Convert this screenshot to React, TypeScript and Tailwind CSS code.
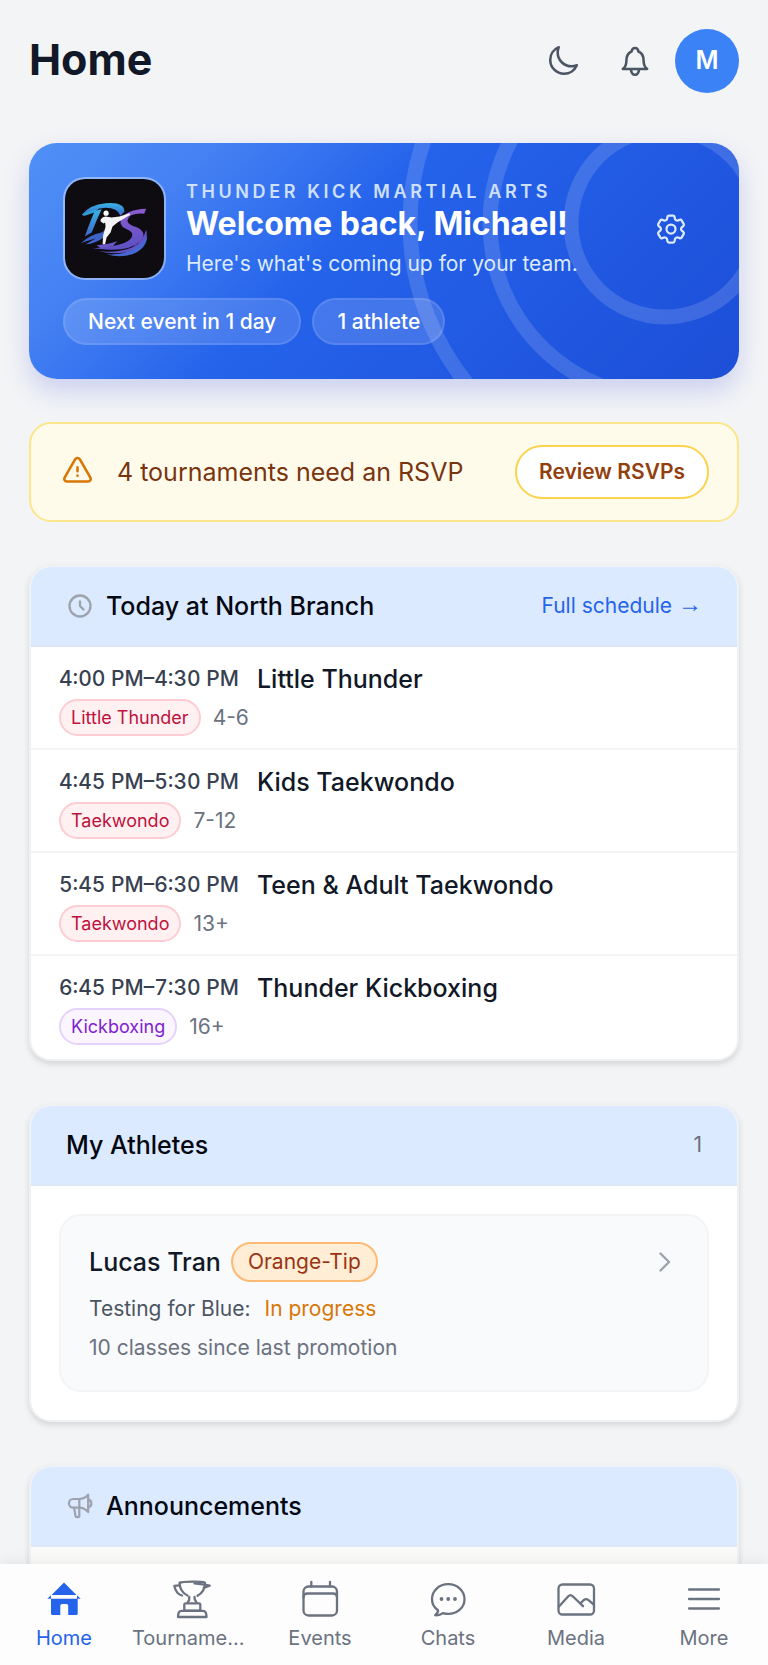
import type { ReactNode } from 'react'
import { HiOutlineClock } from 'react-icons/hi'
import { HiOutlineCog6Tooth, HiOutlineMoon } from 'react-icons/hi2'

const classes = [
  { time: '4:00 PM–4:30 PM', name: 'Little Thunder', tag: 'Little Thunder', ages: '4-6', tone: 'rose' },
  { time: '4:45 PM–5:30 PM', name: 'Kids Taekwondo', tag: 'Taekwondo', ages: '7-12', tone: 'rose' },
  { time: '5:45 PM–6:30 PM', name: 'Teen & Adult Taekwondo', tag: 'Taekwondo', ages: '13+', tone: 'rose' },
  { time: '6:45 PM–7:30 PM', name: 'Thunder Kickboxing', tag: 'Kickboxing', ages: '16+', tone: 'purple' },
]

const tones: Record<string, string> = {
  rose: 'border-[#fecdd3] bg-[#fff1f2] text-[#be123c]',
  purple: 'border-[#e4d4fd] bg-[#faf5ff] text-[#7e22ce]',
}

interface IconProps {
  className?: string
  box?: string
  width?: number
  children: ReactNode
}

function Icon({ className = 'size-10', box = '0 0 40 40', width = 2.3, children }: IconProps) {
  return (
    <svg
      className={className}
      viewBox={box}
      fill="none"
      stroke="currentColor"
      strokeWidth={width}
      strokeLinecap="round"
      strokeLinejoin="round"
      aria-hidden="true"
    >
      {children}
    </svg>
  )
}

function BellIcon() {
  return (
    <Icon className="size-9" box="0 0 24 24" width={1.7}>
      <path d="M3.9 17.3c1.8-1 2.3-2.5 2.4-5.8.1-3.1.8-4.8 3.4-5.8.2-1.5 1-2.4 2.3-2.4s2.1.9 2.3 2.4c2.6 1 3.3 2.7 3.4 5.8.1 3.3.6 4.8 2.4 5.8z" />
      <path d="M9.3 17.6c.2 2.4 1.2 3.6 2.7 3.6s2.5-1.2 2.7-3.6" />
    </Icon>
  )
}

function WarningIcon() {
  return (
    <Icon className="size-9 shrink-0 text-[#d97706]" box="0 0 36 36" width={2.6}>
      <path d="M16.1 5.4 5.6 23.6a2.6 2.6 0 0 0 2.2 3.9h21.4a2.6 2.6 0 0 0 2.2-3.9L20.9 5.4a2.8 2.8 0 0 0-4.8 0z" />
      <path d="M18.5 13.3v4M18.5 21.6v.1" />
    </Icon>
  )
}

function MegaphoneIcon() {
  return (
    <Icon className="size-7 text-[#9ca3af]" box="0 0 24 24" width={1.9}>
      <path d="M11.4 6H6.2a3.7 3.7 0 0 0 0 7.4h5.2z" />
      <path d="M11.4 6c2.8 0 5.6-1.4 7.6-3.6v14.8c-2-2.2-4.8-3.8-7.6-3.8" />
      <path d="M19 6.6c3.7.7 3.7 5.7 0 6.4" />
      <path d="M6.9 13.4l1.3 7.3c.3 1.2 2.9 1.2 3.2 0v-7.3" />
    </Icon>
  )
}

function TrophyIcon() {
  return (
    <Icon>
      <path d="M7.5 4c3-1.5 22-1.8 25.5-.3 0 6-2.5 10.3-7.5 13M7.5 4c.4 5.5 2.500 10 8 12.500" />
      <path d="M7.5 6.3 2.3 6.9c1.2 5 3.5 8.6 7.700 9.600" />
      <path d="M22.5 4.4 32.5 5.6l5.2 1-6 2.2" />
      <path d="M17.3 18c.2 2.3-.3 4-1.6 5.4M22.5 18c-.2 2.3.5 4 2 5.4" />
      <path d="M13.5 24.3h13.5a1.3 1.3 0 0 1 1.3 1.3v6H12.300v-6a1.300 1.300 0 0 1 1.200-1.300z" />
      <path d="M9.5 31.8h21.5c2 0 3.5 2.5 3.5 6.2H6c0-3.7 1.5-6.2 3.5-6.2z" />
    </Icon>
  )
}

function Logo() {
  return (
    <svg className="size-full" viewBox="0 0 100 100" aria-hidden="true">
      <defs>
        <linearGradient id="dojoD" x1="0" y1="0" x2="0" y2="1">
          <stop offset="0" stopColor="#38b4e6" />
          <stop offset="1" stopColor="#3f66cc" />
        </linearGradient>
        <linearGradient id="dojoS" x1="0" y1="0" x2="0" y2="1">
          <stop offset="0" stopColor="#8c5ad2" />
          <stop offset="1" stopColor="#5b50c4" />
        </linearGradient>
      </defs>
      <path d="M17 36Q25 26 41 24.5Q60 23 60 33L56 37Q53 29 41 29Q29 30 19 37Z" fill="url(#dojoD)" />
      <path d="M17 36Q24 32 34 30L29 34L20 37Z" fill="#2f9fd8" />
      <path d="M30 32L37 30.5Q32 41 27 54L20 58Q25 44 30 32Z" fill="url(#dojoD)" />
      <path d="M16 65Q25 56 37 54L43 50L39 59Q31 65 21 66Q27 62 31 60Q23 62 16 65Z" fill="#3f62c8" />
      <path d="M82 30L80 35Q64 34 63 42Q63 46 73 49Q83 54 77 62Q67 72 45 71.5Q35 71 28 70Q42 69 52 67Q68 63 68 56Q68 53 61 50Q54 47 57 40Q62 31 82 30Z" fill="url(#dojoS)" />
      <path d="M32 67Q45 66 53 63L48 68L36 70Z" fill="#6b56c8" />
      <path d="M82 51Q86 66 67 73Q51 77 34 73Q54 75 68 69Q79 63 82 51Z" fill="#6252c6" />
      <path d="M83 57Q83 70 68 76Q55 80 42 76Q59 77 69 71Q79 66 83 57Z" fill="#4668d2" />
      <circle cx="41.5" cy="34.5" r="2.6" fill="#fff" />
      <path d="M36 41Q38 38 41 38L47 39L55 38L65 34.5L66 36L53 44L48 48L46 54L42 59L40.5 66L38 66L38.5 57L41 48L40.5 44L39 45L36 43Z" fill="#f4f4f6" />
    </svg>
  )
}

function SectionHeader({ title, icon, children }: { title: string; icon?: ReactNode; children?: ReactNode }) {
  return (
    <div className="flex h-20 items-center gap-3 border-b-2 border-[#dce6f5] bg-[#dbeafe] px-[35px] text-[#030712]">
      {icon}
      <h2 className="flex-1 text-[25px] font-medium leading-8">{title}</h2>
      {children}
    </div>
  )
}

function Card({ children }: { children: ReactNode }) {
  return (
    <section className="overflow-hidden rounded-[22px] border-2 border-[#e5e7eb]/60 bg-white shadow-[0_3px_6px_rgba(0,0,0,0.13)]">
      {children}
    </section>
  )
}

function Chip({ children }: { children: ReactNode }) {
  return (
    <span className="rounded-full border-2 border-white/10 bg-white/15 px-[23px] py-[7px] text-[21px] font-medium leading-[29px]">
      {children}
    </span>
  )
}

function TabItem({ label, active, children }: { label: string; active?: boolean; children: ReactNode }) {
  return (
    <a
      href="#"
      aria-current={active ? 'page' : undefined}
      className={`flex min-w-0 flex-1 flex-col items-center px-1 ${active ? 'text-[#2563eb]' : 'text-[#6b7280]'}`}
    >
      {children}
      <span className="mt-[5px] max-w-full truncate text-[20px] leading-7">{label}</span>
    </a>
  )
}

export default function App() {
  return (
    <div className="flex h-screen flex-col bg-[#f3f4f6] font-['Inter',sans-serif] text-[#111827]">
      <div className="min-h-0 flex-1 overflow-hidden">
        <header className="flex items-center px-[29px] pt-[25px]">
          <h1 className="flex-1 pb-1 text-[43px] font-bold leading-[64px]">Home</h1>
          <button type="button" aria-label="Dark mode" className="flex size-[72px] items-center justify-center text-[#4b5563]">
            <HiOutlineMoon className="size-[34px] stroke-[1.8]" />
          </button>
          <button type="button" aria-label="Notifications" className="flex size-[72px] items-center justify-center text-[#4b5563]">
            <BellIcon />
          </button>
          <button type="button" aria-label="Account" className="ml-1 size-16 rounded-full bg-[#3b82f6] text-[25px] font-semibold text-white">
            M
          </button>
        </header>

        <main className="flex flex-col gap-[43px] px-[29px] pt-[46px]">
          <section className="relative rounded-[28px] bg-[linear-gradient(135deg,#5090f6_0%,#4581f3_20%,#2563eb_43%,#1d4ed8_100%)] p-[34px] text-white shadow-[0_12px_26px_rgba(60,80,220,0.22)]">
            <div className="absolute inset-0 overflow-hidden rounded-[28px]">
              <svg className="absolute -top-[183px] -right-[189px] size-[526px]" viewBox="0 0 526 526" fill="none" stroke="#fff" strokeOpacity="0.14" strokeWidth="15" aria-hidden="true">
                <circle cx="263" cy="263" r="94" />
                <circle cx="263" cy="263" r="175" />
                <circle cx="263" cy="263" r="255" />
              </svg>
            </div>
            <div className="relative flex items-center gap-5">
              <div className="size-[103px] shrink-0 overflow-hidden rounded-[22px] border-2 border-white/40 bg-[#0e0c10] bg-clip-padding">
                <Logo />
              </div>
              <div className="min-w-0 flex-1 pt-[3px]">
                <p className="text-[18px] font-semibold leading-6 tracking-[0.2em] text-[#cfe0fd]">THUNDER KICK MARTIAL ARTS</p>
                <p className="text-[32px] font-bold leading-10">Welcome back, Michael!</p>
                <p className="mt-1 text-[21px] leading-8 text-[#dbeafe]">Here's what's coming up for your team.</p>
              </div>
              <button type="button" aria-label="Settings" className="flex size-[68px] items-center justify-center text-[#dbeafe]">
                <HiOutlineCog6Tooth className="size-9" />
              </button>
            </div>
            <div className="relative mt-[18px] flex gap-[11px]">
              <Chip>Next event in 1 day</Chip>
              <Chip>1 athlete</Chip>
            </div>
          </section>

          <section className="flex items-center gap-[22px] rounded-[22px] border-2 border-[#fde68a] bg-[#fffbeb] px-7 py-[21px]">
            <WarningIcon />
            <p className="flex-1 text-[25px] leading-8 text-[#78350f]">4 tournaments need an RSVP</p>
            <button type="button" className="rounded-full border-2 border-[#fcd34d] bg-white px-[22px] py-2 text-[21px] font-semibold leading-[34px] text-[#92400e]">
              Review RSVPs
            </button>
          </section>

          <Card>
            <SectionHeader title="Today at North Branch" icon={<HiOutlineClock className="size-7 text-[#9ca3af]" />}>
              <a href="#" className="flex items-center gap-[6px] text-[21px] leading-8 text-[#2563eb]">
                Full schedule
                <span className="pb-1 font-['Liberation_Sans',sans-serif] text-[24px] leading-7">→</span>
              </a>
            </SectionHeader>
            {classes.map((c) => (
              <div key={c.time} className="border-b-2 border-[#f3f4f6] px-7 pt-4 pb-3 last:border-transparent">
                <div className="flex items-center gap-[18px]">
                  <span className="text-[21px] font-medium leading-8 tabular-nums text-[#374151]">{c.time}</span>
                  <span className="text-[25px] font-medium leading-8">{c.name}</span>
                </div>
                <div className="mt-1 flex items-center gap-3">
                  <span className={`rounded-full border-2 px-[10px] py-1 text-[18px] leading-[25px] ${tones[c.tone]}`}>{c.tag}</span>
                  <span className="text-[21px] leading-8 text-[#6b7280]">{c.ages}</span>
                </div>
              </div>
            ))}
          </Card>

          <Card>
            <SectionHeader title="My Athletes">
              <span className="text-[21px] text-[#6b7280]">1</span>
            </SectionHeader>
            <div className="p-7">
              <a href="#" className="block rounded-[22px] border-2 border-[#f3f4f6] bg-[#f9fafb] px-7 py-[26px]">
                <div className="flex items-center">
                  <span className="text-[25px] font-medium leading-8">Lucas Tran</span>
                  <span className="ml-[10px] rounded-full border-2 border-[#fdba74] bg-[#ffedd5] px-[15px] py-[2px] text-[21px] leading-8 text-[#9a3412]">
                    Orange-Tip
                  </span>
                  <Icon className="ml-auto size-7 text-[#9ca3af]" box="0 0 28 28" width={2.4}>
                    <path d="M9.5 5.5l8.5 8.5-8.5 8.5" />
                  </Icon>
                </div>
                <p className="mt-[11px] text-[21px] leading-8 text-[#4b5563]">
                  Testing for Blue:<span className="ml-[14px] text-[#d97706]">In progress</span>
                </p>
                <p className="mt-[7px] text-[21px] leading-8 text-[#6b7280]">10 classes since last promotion</p>
              </a>
            </div>
          </Card>

          <Card>
            <SectionHeader title="Announcements" icon={<MegaphoneIcon />} />
            <div className="h-28 bg-[#fafaf9]" />
          </Card>
        </main>
      </div>

      <nav className="relative flex h-[101px] shrink-0 bg-[#fdfdfd] pt-[15px] shadow-[0_-3px_14px_rgba(0,0,0,0.06)]">
        <TabItem label="Home" active>
          <Icon width={0}>
            <path
              d="M20 3.5 7.5 16h25L20 3.5zM3.3 19.8 7 16.3v3.5h26v-3.5l3.7 3.5h-3v14.7a1.5 1.5 0 0 1-1.5 1.5h-8V26.8a1.8 1.8 0 0 0-1.8-1.8h-4.3a1.8 1.8 0 0 0-1.8 1.8V36H8.5A1.5 1.5 0 0 1 7 34.5V19.8z"
              fill="currentColor"
            />
          </Icon>
        </TabItem>
        <TabItem label="Tournaments">
          <TrophyIcon />
        </TabItem>
        <TabItem label="Events">
          <Icon>
            <rect x="3.5" y="7.5" width="33.5" height="29" rx="5" />
            <path d="M3.5 18.5c0-2.6 1.4-4 4-4H33c2.6 0 4 1.4 4 4M11.3 3v4.5M30 3v4.5" />
          </Icon>
        </TabItem>
        <TabItem label="Chats">
          <Icon>
            <path d="M10 31.2c.3 2.2-1 3.8-2.9 5 3 .4 5.5-.3 7.7-2.1 1.7.5 3.5.8 5.4.8 9.2 0 16.3-6.3 16.3-14.7S29.4 5.2 20.2 5.2 4 11.8 4 20.2c0 4.5 2.2 8.3 6 11z" />
            <path d="M13.5 20v.1M20.2 20v.1M27 20v.1" strokeWidth="3.8" />
          </Icon>
        </TabItem>
        <TabItem label="Media">
          <Icon>
            <rect x="2.5" y="5.5" width="35.5" height="30" rx="4" />
            <path d="M3 27.5 12.3 17.2q2.2-2.2 4.4 0L27 27.2M24.7 24l3-2.8q2.3-2 4.5-.3l5.5 4.6" />
          </Icon>
        </TabItem>
        <TabItem label="More">
          <Icon>
            <path d="M5 10.5h30M5 20h30M5 29.5h30" />
          </Icon>
        </TabItem>
      </nav>
    </div>
  )
}
